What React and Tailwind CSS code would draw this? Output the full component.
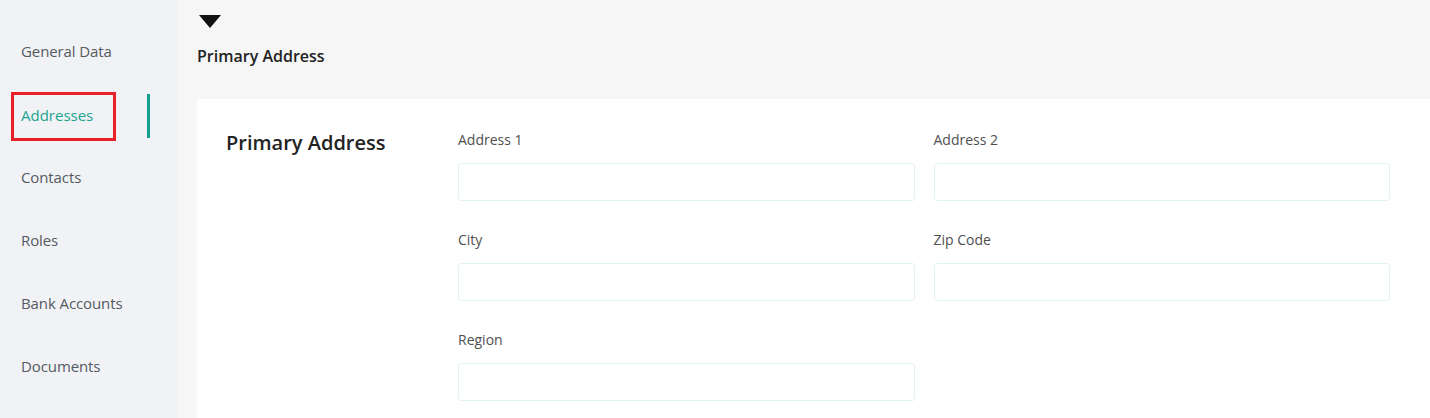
import React from 'react';

const navItems = ['General Data', 'Addresses', 'Contacts', 'Roles', 'Bank Accounts', 'Documents'];

const Field = ({ label }) => (
  <div className="flex flex-col">
    <label className="text-[14px] leading-[20px] text-[#4f4f4f]">{label}</label>
    <input
      type="text"
      className="mt-[13px] h-[38px] w-full rounded-[3px] border border-[#e2f2f0] bg-white px-3 outline-none"
    />
  </div>
);

const App = () => {
  return (
    <div className="flex h-[418px] w-full overflow-hidden bg-[#f6f6f6] font-['Open_Sans',sans-serif]">
      {/* Sidebar */}
      <aside className="w-[178px] shrink-0 bg-[#f1f2f6] pt-[31px]">
        {navItems.map((item) => {
          const active = item === 'Addresses';
          return (
            <div key={item} className="relative flex h-[63px] items-start">
              {active ? (
                <>
                  <div className="ml-[11px] -mt-[2px] flex h-[49px] w-[105px] items-center border-[3px] border-[#e8202a] pb-[3px] pl-[7px] text-[15px] text-[#1aa58e]">
                    {item}
                  </div>
                  <div className="absolute left-[147px] top-0 h-[44px] w-[3px] bg-[#14a08a]" />
                </>
              ) : (
                <div className="pl-[21px] pt-[8px] text-[15px] tracking-[-0.1px] leading-[24px] text-[#555a61]">{item}</div>
              )}
            </div>
          );
        })}
      </aside>

      {/* Main */}
      <main className="flex flex-1 flex-col pl-[19px]">
        <div className="pt-[15px] pl-[2px]">
          <svg width="22" height="13" viewBox="0 0 22 13">
            <polygon points="0,0 22,0 11,13" fill="#111" />
          </svg>
        </div>
        <h2 className="mt-[16px] text-[16px] font-semibold leading-[24px] text-[#222]">Primary Address</h2>
        <section className="mt-[31px] flex flex-1 bg-white pl-[29px] pt-[29px]">
          <h3 className="w-[232px] shrink-0 text-[20px] font-semibold leading-[30px] text-[#222]">Primary Address</h3>
          <div className="grid w-[932px] grid-cols-2 content-start gap-x-[19px] gap-y-[29px] pt-[2px]">
            <Field label="Address 1" />
            <Field label="Address 2" />
            <Field label="City" />
            <Field label="Zip Code" />
            <Field label="Region" />
          </div>
        </section>
      </main>
    </div>
  );
};

export default App;
